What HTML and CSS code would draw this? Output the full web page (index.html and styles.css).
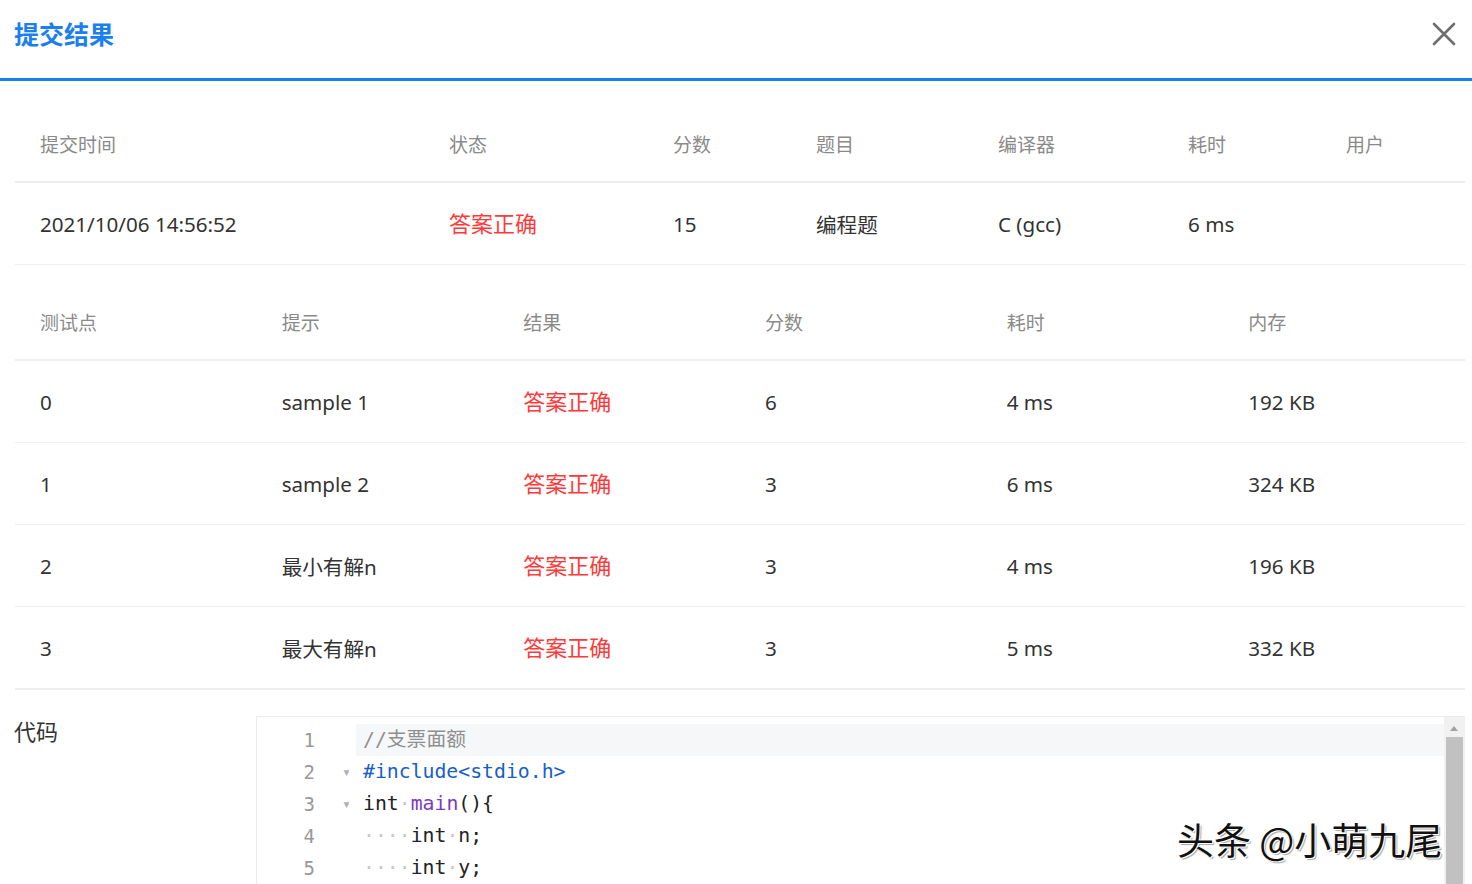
FILE: index.html
```html
<!DOCTYPE html>
<html lang="zh">
<head>
<meta charset="utf-8">
<title>提交结果</title>
<link rel="stylesheet" href="styles.css">
</head>
<body>
<div class="dialog">
  <header class="dlg-head">
    <h1 class="dlg-title">提交结果</h1>
    <button class="dlg-close" aria-label="关闭">
      <svg width="24" height="24" viewBox="0 0 24 24"><path d="M2 2 L22 22 M22 2 L2 22" stroke="#6e6e6e" stroke-width="2.6" stroke-linecap="round" fill="none"/></svg>
    </button>
  </header>

  <div class="dlg-body">
    <table class="grid summary">
      <colgroup>
        <col style="width:409px"><col style="width:224px"><col style="width:143px"><col style="width:182px"><col style="width:190px"><col style="width:158px"><col style="width:144px">
      </colgroup>
      <thead>
        <tr><th>提交时间</th><th>状态</th><th>分数</th><th>题目</th><th>编译器</th><th>耗时</th><th>用户</th></tr>
      </thead>
      <tbody>
        <tr><td>2021/10/06 14:56:52</td><td class="ok">答案正确</td><td>15</td><td>编程题</td><td>C (gcc)</td><td>6 ms</td><td></td></tr>
      </tbody>
    </table>

    <table class="grid cases">
      <thead>
        <tr><th>测试点</th><th>提示</th><th>结果</th><th>分数</th><th>耗时</th><th>内存</th></tr>
      </thead>
      <tbody>
        <tr><td>0</td><td>sample 1</td><td class="ok">答案正确</td><td>6</td><td>4 ms</td><td>192 KB</td></tr>
        <tr><td>1</td><td>sample 2</td><td class="ok">答案正确</td><td>3</td><td>6 ms</td><td>324 KB</td></tr>
        <tr><td>2</td><td>最小有解n</td><td class="ok">答案正确</td><td>3</td><td>4 ms</td><td>196 KB</td></tr>
        <tr><td>3</td><td>最大有解n</td><td class="ok">答案正确</td><td>3</td><td>5 ms</td><td>332 KB</td></tr>
      </tbody>
    </table>

    <section class="code-sec">
      <div class="code-label">代码</div>
      <div class="editor">
        <div class="lines">
          <div class="line active"><span class="ln">1</span><span class="fold"></span><span class="src"><span class="c-com">//支票面额</span></span></div>
          <div class="line"><span class="ln">2</span><span class="fold">▾</span><span class="src"><span class="c-pre">#include&lt;stdio.h&gt;</span></span></div>
          <div class="line"><span class="ln">3</span><span class="fold">▾</span><span class="src">int<span class="ws">·</span><span class="c-fn">main</span>(){</span></div>
          <div class="line"><span class="ln">4</span><span class="fold"></span><span class="src"><span class="ws">····</span>int<span class="ws">·</span>n;</span></div>
          <div class="line"><span class="ln">5</span><span class="fold"></span><span class="src"><span class="ws">····</span>int<span class="ws">·</span>y;</span></div>
          <div class="line"><span class="ln">6</span><span class="fold"></span><span class="src"></span></div>
        </div>
        <div class="vscroll">
          <div class="vs-up"></div>
          <div class="vs-thumb"></div>
        </div>
      </div>
    </section>
  </div>
  <div class="watermark">头条 @小萌九尾</div>
</div>
</body>
</html>
```

FILE: styles.css
```css
html, body {
  margin: 0;
  padding: 0;
  background: #ffffff;
  overflow: hidden;
}
body {
  font-family: "Noto Sans", "Noto Sans CJK SC", sans-serif;
  color: #333333;
}
.dialog {
  width: 1472px;
  height: 884px;
  position: relative;
  overflow: hidden;
}
.dlg-head {
  height: 78px;
  border-bottom: 3px solid #1b7ff0;
  display: flex;
  align-items: center;
  justify-content: space-between;
  padding: 0 16px 0 14px;
  box-sizing: content-box;
}
.dlg-title {
  margin: 0;
  margin-top: -12px;
  font-family: "Noto Sans CJK SC", sans-serif;
  font-weight: 700;
  font-size: 25px;
  color: #1b7ff0;
  letter-spacing: 0;
}
.dlg-close {
  border: 0;
  background: none;
  padding: 0;
  width: 24px;
  height: 24px;
  margin-top: -10px;
  cursor: pointer;
}
.dlg-body {
  padding: 25px 7px 0 15px;
}
.grid {
  width: 1450px;
  border-collapse: collapse;
  table-layout: fixed;
}
.grid th {
  height: 75px;
  text-align: left;
  font-weight: 400;
  font-size: 19px;
  color: #8a8a8a;
  padding: 0 0 0 25px;
  border-bottom: 2px solid #eeeeee;
  font-family: "Noto Sans CJK SC", sans-serif;
}
.grid td {
  height: 81px;
  padding: 0 0 0 25px;
  font-size: 20.6px;
  color: #333333;
  border-bottom: 1px solid #eeeeee;
  white-space: nowrap;
}
.grid td.ok {
  color: #ff3a3a;
  font-size: 22px;
  font-family: "Noto Sans CJK SC", sans-serif;
  padding-bottom: 4px;
  height: 77px;
}
.cases {
  margin-top: 19px;
}
.cases tbody tr:last-child td {
  border-bottom: 2px solid #eeeeee;
}
.code-sec {
  display: flex;
  margin-top: 26px;
  margin-left: -1px;
}
.code-label {
  width: 242px;
  font-size: 22px;
  color: #333333;
  font-family: "Noto Sans CJK SC", sans-serif;
  line-height: 32px;
  margin-top: -2px;
}
.editor {
  flex: 1;
  border: 1px solid #ececec;
  border-right: 0;
  height: 300px;
  display: flex;
  padding-top: 7px;
  box-sizing: border-box;
}
.lines {
  flex: 1;
  font-family: "DejaVu Sans Mono", "Noto Sans CJK SC", monospace;
  font-size: 19.8px;
}
.line {
  height: 32px;
  line-height: 32px;
  display: flex;
}
.ln {
  width: 58px;
  text-align: right;
  color: #999999;
  font-size: 19px;
}
.fold {
  width: 41px;
  text-align: center;
  color: #b0b0b0;
  font-size: 15px;
  padding-left: 22px;
  box-sizing: border-box;
}
.src {
  flex: 1;
  padding-left: 7px;
  color: #222222;
  white-space: pre;
}
.line.active .src {
  background: #f6f7f9;
}
.c-com { color: #8f8f8f; }
.c-pre { color: #1660c8; }
.c-fn { color: #7a3cc0; }
.ws { color: #c8c8c8; }
.vscroll {
  width: 21px;
  background: #f1f1f1;
  margin-top: -7px;
  padding: 0 2px;
  box-sizing: border-box;
}
.vs-up {
  height: 20px;
  position: relative;
}
.vs-up::after {
  content: "";
  position: absolute;
  left: 4px;
  top: 9px;
  border-left: 4px solid transparent;
  border-right: 4px solid transparent;
  border-bottom: 5px solid #a3a3a3;
}
.vs-thumb {
  height: 260px;
  background: #c1c1c1;
}
.watermark {
  position: absolute;
  left: 1177px;
  top: 812px;
  font-family: "Noto Sans CJK SC", sans-serif;
  font-size: 37px;
  color: #111111;
  letter-spacing: 0;
  text-shadow: 1px 1px 0 #ffffff, -1px -1px 0 #ffffff, 2px 2px 1px rgba(0,0,0,0.35);
}
```
